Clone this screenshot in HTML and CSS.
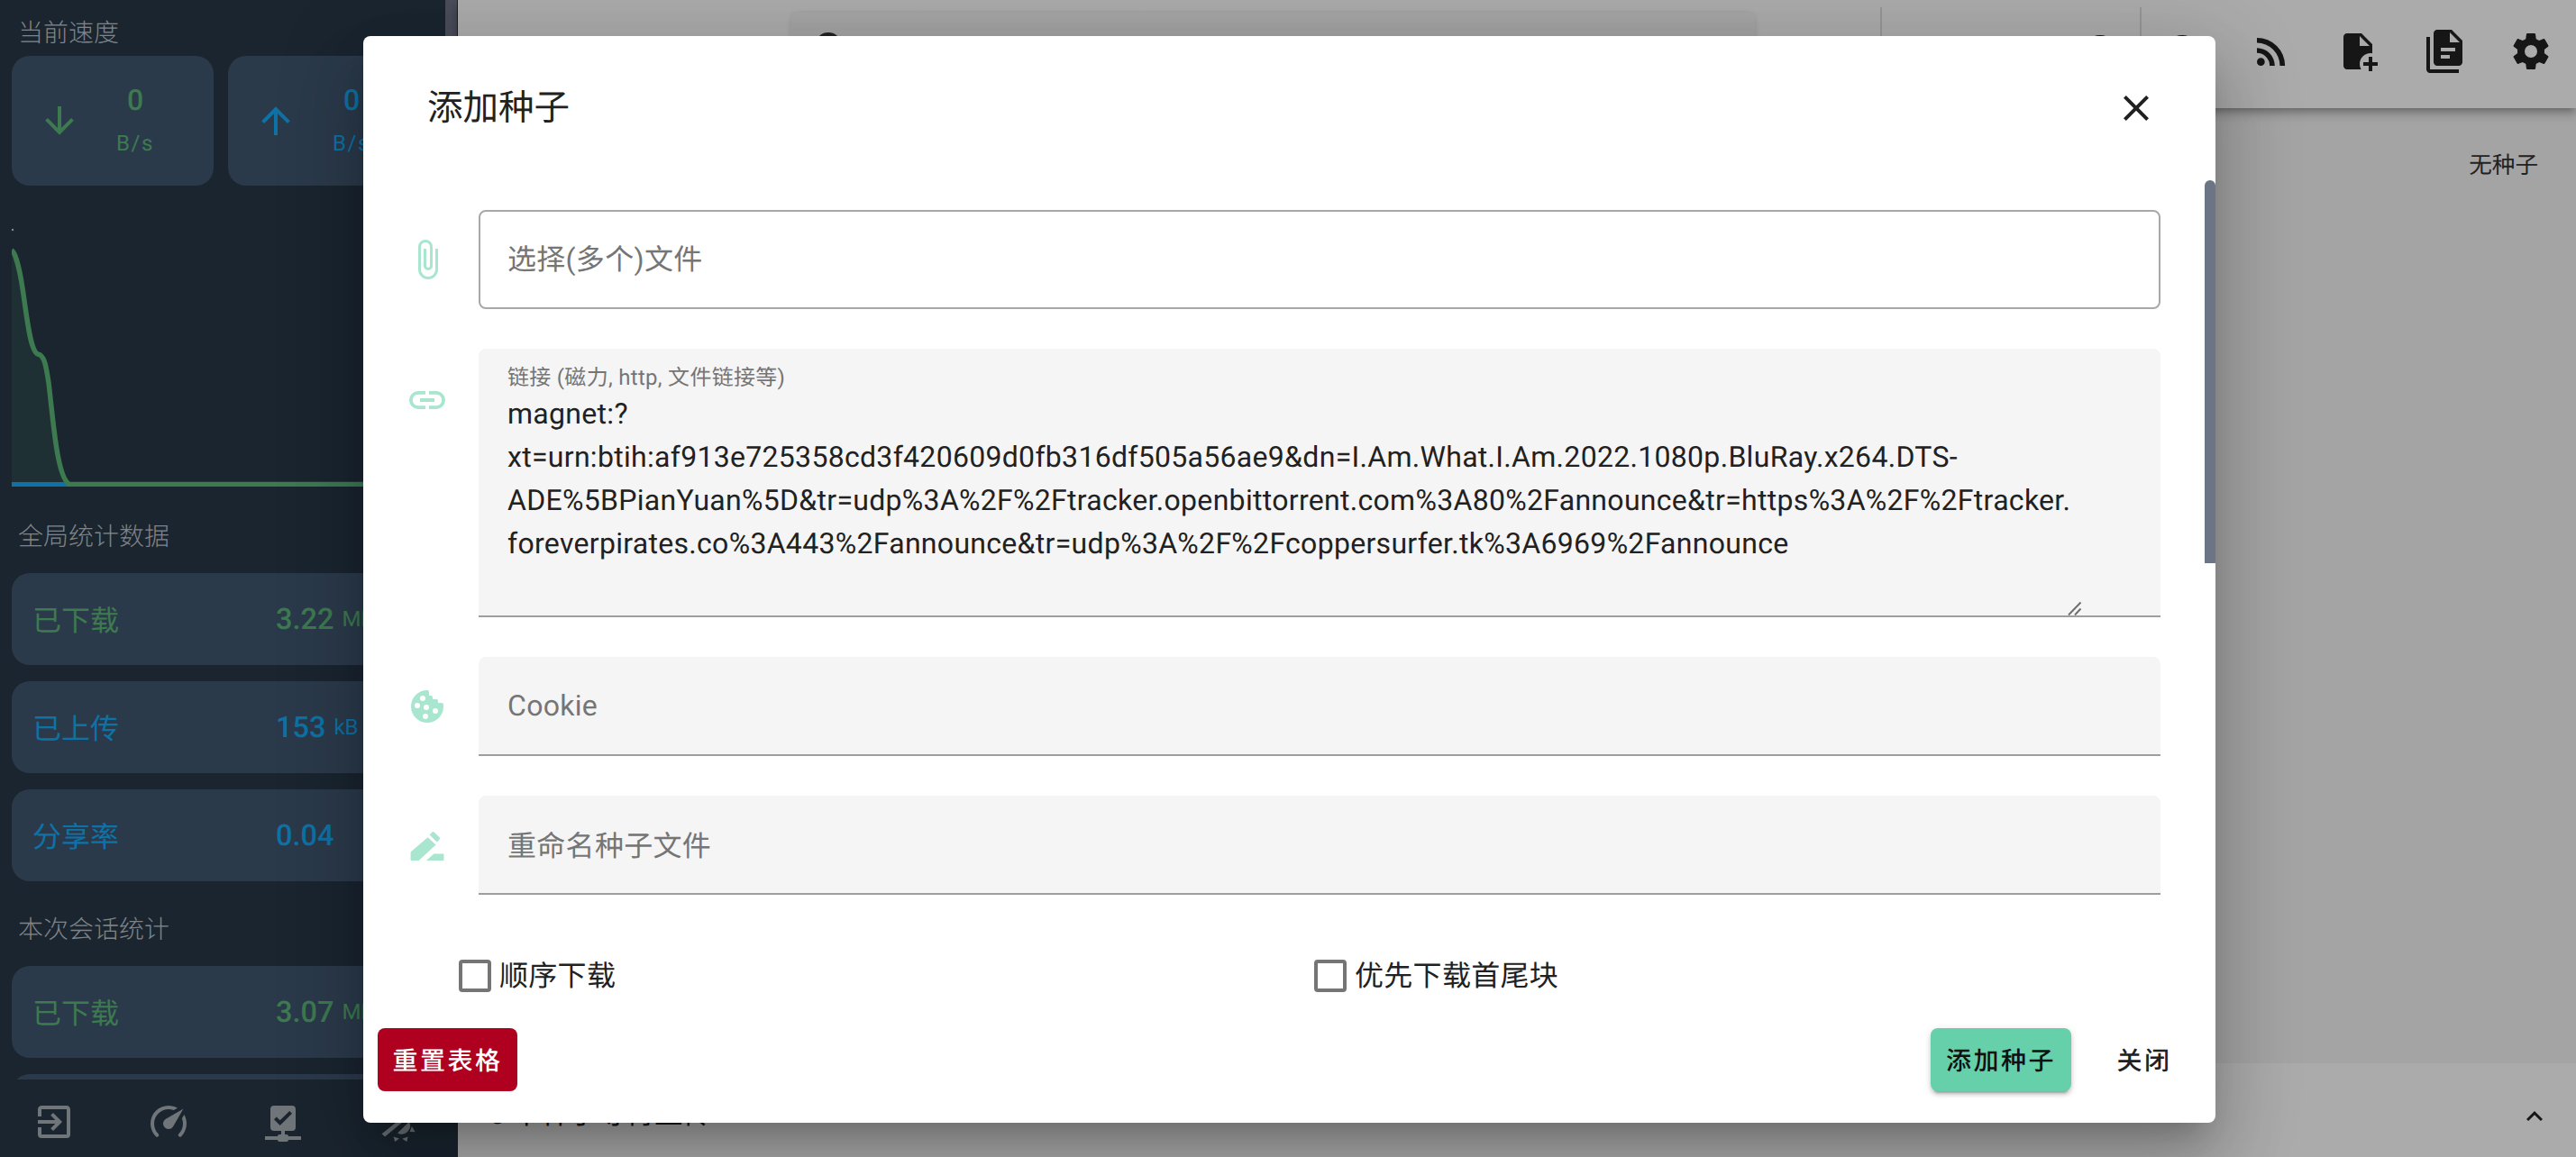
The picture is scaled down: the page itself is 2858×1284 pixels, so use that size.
FILE: index.html
```html
<!DOCTYPE html>
<html lang="zh">
<head>
<meta charset="utf-8">
<title>添加种子</title>
<link rel="stylesheet" href="styles.css">
</head>
<body>
<div class="app">
  <aside class="sidebar">
    <div class="side-scroll">
      <h3 class="side-title first">当前速度</h3>
      <div class="speed-row">
        <div class="speed-card green">
          <svg class="ic" viewBox="0 0 24 24"><path d="M11,4H13V16L18.5,10.5L19.92,11.92L12,19.84L4.08,11.92L5.5,10.5L11,16V4Z"/></svg>
          <div class="speed-text"><div class="speed-num">0</div><div class="speed-unit">B/s</div></div>
        </div>
        <div class="speed-card blue">
          <svg class="ic" viewBox="0 0 24 24"><path d="M13,20H11V8L5.5,13.5L4.08,12.08L12,4.16L19.92,12.08L18.5,13.5L13,8V20Z"/></svg>
          <div class="speed-text"><div class="speed-num">0</div><div class="speed-unit">B/s</div></div>
        </div>
      </div>
      <svg class="chart" viewBox="0 0 495 300" preserveAspectRatio="none">
        <circle cx="1" cy="15" r="1.2" fill="#8a8f95"/>
        <path class="chart-fill" d="M0 38 C4 40 9 60 12 80 C16 105 20 150 29 153 C36 154 38 165 41 185 C46 225 50 290 64 297.5 L0 297.5Z"/>
        <path class="chart-blue" d="M0 297.5H64"/>
        <path class="chart-green" d="M0 38 C4 40 9 60 12 80 C16 105 20 150 29 153 C36 154 38 165 41 185 C46 225 50 290 64 297.5 L495 297.5"/>
      </svg>
      <h3 class="side-title">全局统计数据</h3>
      <div class="stat green"><span class="stat-label">已下载</span><span class="stat-val">3.22</span><span class="stat-unit">MB</span></div>
      <div class="stat blue"><span class="stat-label">已上传</span><span class="stat-val">153</span><span class="stat-unit">kB</span></div>
      <div class="stat blue"><span class="stat-label">分享率</span><span class="stat-val">0.04</span></div>
      <h3 class="side-title">本次会话统计</h3>
      <div class="stat green"><span class="stat-label">已下载</span><span class="stat-val">3.07</span><span class="stat-unit">MB</span></div>
      <div class="stat blue"></div>
    </div>
    <nav class="side-nav">
      <svg class="ic" viewBox="0 0 24 24"><path d="M10.09,15.59L11.5,17L16.5,12L11.5,7L10.09,8.41L12.67,11H3V13H12.67L10.09,15.59M19,3H5C3.89,3 3,3.9 3,5V9H5V5H19V19H5V15H3V19A2,2 0 0,0 5,21H19A2,2 0 0,0 21,19V5C21,3.89 20.1,3 19,3Z"/></svg>
      <svg class="ic" viewBox="0 0 24 24"><path d="M12,16A3,3 0 0,1 9,13C9,11.88 9.61,10.9 10.5,10.39L20.21,4.77L14.68,14.35C14.18,15.33 13.17,16 12,16M12,3C13.81,3 15.5,3.5 16.97,4.32L14.87,5.53C14,5.19 13,5 12,5A8,8 0 0,0 4,13C4,15.21 4.89,17.21 6.34,18.65H6.35C6.74,19.04 6.74,19.67 6.35,20.06C5.96,20.45 5.32,20.45 4.93,20.07V20.07C3.12,18.26 2,15.76 2,13A10,10 0 0,1 12,3M22,13C22,15.76 20.88,18.26 19.07,20.07V20.07C18.68,20.45 18.05,20.45 17.66,20.06C17.27,19.67 17.27,19.04 17.66,18.65V18.65C19.11,17.2 20,15.21 20,13C20,12 19.81,11 19.46,10.1L20.67,8C21.5,9.5 22,11.18 22,13Z"/></svg>
      <svg class="ic" viewBox="0 0 24 24"><path d="M15,20A1,1 0 0,0 14,19H13V17H17A2,2 0 0,0 19,15V5A2,2 0 0,0 17,3H7A2,2 0 0,0 5,5V15A2,2 0 0,0 7,17H11V19H10A1,1 0 0,0 9,20H2V22H9A1,1 0 0,0 10,23H14A1,1 0 0,0 15,22H22V20H15M10.34,14L7,10.66L8.41,9.25L10.34,11.18L15.59,6L17,7.41L10.34,14Z"/></svg>
      <svg class="ic" viewBox="0 0 24 24"><path d="M3.3 18.6L13.5 10.5L15 12L5 20.2ZM12 18.3L18.5 11.9A4.8 4.8 0 0 1 12 18.3ZM9.8 20.2L13 21.3L10.6 23ZM14.6 21.4L17.8 20.2L17.2 23ZM20 14.5L21.8 17.6L18.8 17.5Z"/></svg>
    </nav>
    <div class="side-bar-thumb"></div>
  </aside>

  <main class="main">
    <header class="appbar">
      <div class="search">
        <svg class="ic" viewBox="0 0 24 24"><circle cx="10" cy="10" r="6.5" fill="none" stroke="currentColor" stroke-width="2"/><path d="M14.6 16L16 14.6L21 19.6L19.6 21Z"/></svg>
      </div>
      <span class="vbar vbar-a"></span>
      <div class="hump-wrap"><svg class="ic" viewBox="0 0 24 24"><circle cx="12" cy="12" r="9"/></svg></div>
      <span class="vbar vbar-b"></span>
      <div class="hump-wrap hump-b"><svg class="ic" viewBox="0 0 24 24"><circle cx="12" cy="12" r="9"/></svg></div>
      <div class="actions">
        <svg class="ic" viewBox="0 0 24 24"><path d="M6.18,15.64A2.18,2.18 0 0,1 8.36,17.82C8.36,19 7.38,20 6.18,20C5,20 4,19 4,17.82A2.18,2.18 0 0,1 6.18,15.64M4,4.44A15.56,15.56 0 0,1 19.56,20H16.73A12.73,12.73 0 0,0 4,7.27V4.44M4,10.1A9.9,9.9 0 0,1 13.9,20H11.07A7.07,7.07 0 0,0 4,12.93V10.1Z"/></svg>
        <svg class="ic" viewBox="0 0 24 24"><path d="M14 2H6C4.89 2 4 2.9 4 4V20C4 21.11 4.89 22 6 22H13.81C13.28 21.09 13 20.05 13 19C13 15.69 15.69 13 19 13C19.34 13 19.67 13.03 20 13.08V8L14 2M13 9V3.5L18.5 9H13M18 15V18H15V20H18V23H20V20H23V18H20V15H18Z"/></svg>
        <svg class="ic" viewBox="0 0 24 24"><path d="M16,0H8C6.9,0 6,0.9 6,2V18C6,19.1 6.9,20 8,20H20C21.1,20 22,19.1 22,18V6L16,0M15,16H10V14H15V16M18,12H10V10H18V12M15,7V1.5L20.5,7H15M4,4V22H20V24H4C2.9,24 2,23.1 2,22V4H4Z"/></svg>
        <svg class="ic" viewBox="0 0 24 24"><path d="M12,15.5A3.5,3.5 0 0,1 8.5,12A3.5,3.5 0 0,1 12,8.5A3.5,3.5 0 0,1 15.5,12A3.5,3.5 0 0,1 12,15.5M19.43,12.97C19.47,12.65 19.5,12.33 19.5,12C19.5,11.67 19.47,11.34 19.43,11L21.54,9.37C21.73,9.22 21.78,8.95 21.66,8.73L19.66,5.27C19.54,5.05 19.27,4.96 19.05,5.05L16.56,6.05C16.04,5.66 15.5,5.32 14.87,5.07L14.5,2.42C14.46,2.18 14.25,2 14,2H10C9.75,2 9.54,2.18 9.5,2.42L9.13,5.07C8.5,5.32 7.96,5.66 7.44,6.05L4.95,5.05C4.73,4.96 4.46,5.05 4.34,5.27L2.34,8.73C2.21,8.95 2.27,9.22 2.46,9.37L4.57,11C4.53,11.34 4.5,11.67 4.5,12C4.5,12.33 4.53,12.65 4.57,12.97L2.46,14.63C2.27,14.78 2.21,15.05 2.34,15.27L4.34,18.73C4.46,18.95 4.73,19.03 4.95,18.95L7.44,17.94C7.96,18.34 8.5,18.68 9.13,18.93L9.5,21.58C9.54,21.82 9.75,22 10,22H14C14.25,22 14.46,21.82 14.5,21.58L14.87,18.93C15.5,18.67 16.04,18.34 16.56,17.94L19.05,18.95C19.27,19.03 19.54,18.95 19.66,18.73L21.66,15.27C21.78,15.05 21.73,14.78 21.54,14.63L19.43,12.97Z"/></svg>
      </div>
    </header>
    <section class="content"><span class="empty">无种子</span></section>
    <footer class="statusbar">
      <span class="status-text">0 个种子等待上传</span>
      <svg class="ic status-caret" viewBox="0 0 24 24"><path d="M7.41,15.41L12,10.83L16.59,15.41L18,14L12,8L6,14L7.41,15.41Z"/></svg>
    </footer>
    <div class="scrim"></div>
  </main>
</div>

<div class="dialog">
  <div class="dlg-head">
    <span class="dlg-title">添加种子</span>
    <svg class="ic dlg-close" viewBox="0 0 24 24"><path d="M19,6.41L17.59,5L12,10.59L6.41,5L5,6.41L10.59,12L5,17.59L6.41,19L12,13.41L17.59,19L19,17.59L13.41,12L19,6.41Z"/></svg>
  </div>
  <div class="dlg-body">
    <div class="row">
      <svg class="ic mint" viewBox="0 0 24 24"><path d="M16.5,6V17.5A4,4 0 0,1 12.5,21.5A4,4 0 0,1 8.5,17.5V5A2.5,2.5 0 0,1 11,2.5A2.5,2.5 0 0,1 13.5,5V15.5A1,1 0 0,1 12.5,16.5A1,1 0 0,1 11.5,15.5V6H10V15.5A2.5,2.5 0 0,0 12.5,18A2.5,2.5 0 0,0 15,15.5V5A4,4 0 0,0 11,1A4,4 0 0,0 7,5V17.5A5.5,5.5 0 0,0 12.5,23A5.5,5.5 0 0,0 18,17.5V6H16.5Z"/></svg>
      <div class="field outlined"><span class="ph">选择(多个)文件</span></div>
    </div>
    <div class="row row-top">
      <svg class="ic mint link-ic" viewBox="0 0 24 24"><path d="M3.9,12C3.9,10.29 5.29,8.9 7,8.9H11V7H7A5,5 0 0,0 2,12A5,5 0 0,0 7,17H11V15.1H7C5.29,15.1 3.9,13.71 3.9,12M8,13H16V11H8V13M17,7H13V8.9H17C18.71,8.9 20.1,10.29 20.1,12C20.1,13.71 18.71,15.1 17,15.1H13V17H17A5,5 0 0,0 22,12A5,5 0 0,0 17,7Z"/></svg>
      <div class="field filled area">
        <label class="float-label">链接 (磁力, http, 文件链接等)</label>
        <textarea class="ta" wrap="off" readonly>magnet:?
xt=urn:btih:af913e725358cd3f420609d0fb316df505a56ae9&amp;dn=I.Am.What.I.Am.2022.1080p.BluRay.x264.DTS-
ADE%5BPianYuan%5D&amp;tr=udp%3A%2F%2Ftracker.openbittorrent.com%3A80%2Fannounce&amp;tr=https%3A%2F%2Ftracker.
foreverpirates.co%3A443%2Fannounce&amp;tr=udp%3A%2F%2Fcoppersurfer.tk%3A6969%2Fannounce</textarea>
        <svg class="grip" viewBox="0 0 16 16"><path d="M1 15.5L14.5 1.5M8 15.5L14.5 8.5"/></svg>
      </div>
    </div>
    <div class="row">
      <svg class="ic mint" viewBox="0 0 24 24"><path d="M12,3A9,9 0 0,0 3,12A9,9 0 0,0 12,21A9,9 0 0,0 21,12C21,11.5 20.96,11 20.87,10.5C20.6,10 20,10 20,10H18V9C18,8 17,8 17,8H15V7C15,6 14,6 14,6H13V4C13,3 12,3 12,3M9.5,6A1.5,1.5 0 0,1 11,7.5A1.5,1.5 0 0,1 9.5,9A1.5,1.5 0 0,1 8,7.5A1.5,1.5 0 0,1 9.5,6M6.5,10A1.5,1.5 0 0,1 8,11.5A1.5,1.5 0 0,1 6.5,13A1.5,1.5 0 0,1 5,11.5A1.5,1.5 0 0,1 6.5,10M11.5,11A1.5,1.5 0 0,1 13,12.5A1.5,1.5 0 0,1 11.5,14A1.5,1.5 0 0,1 10,12.5A1.5,1.5 0 0,1 11.5,11M16.5,13A1.5,1.5 0 0,1 18,14.5A1.5,1.5 0 0,1 16.5,16H16.5A1.5,1.5 0 0,1 15,14.5H15A1.5,1.5 0 0,1 16.5,13M11,16A1.5,1.5 0 0,1 12.5,17.5A1.5,1.5 0 0,1 11,19A1.5,1.5 0 0,1 9.5,17.5A1.5,1.5 0 0,1 11,16Z"/></svg>
      <div class="field filled"><span class="ph">Cookie</span></div>
    </div>
    <div class="row">
      <svg class="ic mint" viewBox="0 0 24 24"><path d="M2.8 20.5v-4.7L12.3 7.6l4.5 4.1-9.5 8.8zM11.5 20.5l4.2-3.8h5.5v3.8zM13.3 6.3l1.4-1.5a.8.8 0 0 1 1.1 0l3 2.8a.8.8 0 0 1 0 1.1L17.4 10.2z"/></svg>
      <div class="field filled"><span class="ph">重命名种子文件</span></div>
    </div>
    <div class="checks">
      <label class="check"><span class="box"></span><span>顺序下载</span></label>
      <label class="check"><span class="box"></span><span>优先下载首尾块</span></label>
    </div>
  </div>
  <div class="dlg-foot">
    <button class="btn btn-reset">重置表格</button>
    <div class="foot-right">
      <button class="btn btn-add">添加种子</button>
      <button class="btn btn-text">关闭</button>
    </div>
  </div>
  <div class="dlg-thumb"></div>
</div>
</body>
</html>
```

FILE: styles.css
```css
* { box-sizing: border-box; }
html, body { margin: 0; height: 100%; overflow: hidden; }
body { font-family: Roboto, "Noto Sans CJK SC", sans-serif; position: relative; background: #fff; color: #212121; text-rendering: geometricPrecision; }
.ic { width: 48px; height: 48px; fill: currentColor; flex: none; display: block; }
.app { display: flex; height: 1284px; }

/* sidebar */
.sidebar { width: 508px; flex: none; background: #1a2530; display: flex; flex-direction: column; position: relative; }
.side-scroll { flex: 1; overflow: hidden; padding-top: 17px; }
.side-title { margin: 0; padding-left: 20px; font-size: 28px; line-height: 40px; font-weight: 300; color: #7f8489; }
.speed-row { display: flex; gap: 16px; padding-left: 13px; margin-top: 5px; }
.speed-card { width: 224px; height: 144px; border-radius: 20px; background: #2b3a4b; display: flex; align-items: center; padding-left: 29px; }
.green { color: #3d7a50; }
.blue { color: #0e72a6; }
.speed-text { width: 100px; margin-left: 10px; text-align: center; }
.speed-num { font-size: 32px; font-weight: 500; line-height: 48px; margin-top: -4px; }
.speed-unit { font-size: 24px; line-height: 36px; margin-top: 6px; letter-spacing: 1.6px; }
.chart { display: block; width: 495px; height: 300px; margin: 34px 0 0 13px; }
.chart-fill { fill: #3d7a50; opacity: .13; stroke: none; }
.chart-blue { stroke: #0e72a6; stroke-width: 5; fill: none; }
.chart-green { stroke: #3d7a50; stroke-width: 5.5; fill: none; }
.chart + .side-title { margin-top: 36px; }
.stat { height: 102px; margin: 0 0 18px 13px; width: 482px; border-radius: 20px; background: #2b3a4b; display: flex; align-items: center; padding-left: 23px; }
.side-title + .stat { margin-top: 20px; }
.stat + .side-title { margin-top: 34px; }
.stat-label { width: 270px; font-size: 32px; font-weight: 400; }
.stat-val { font-size: 32.5px; font-weight: 500; }
.stat-unit { font-size: 24px; margin-left: 9px; }
.side-nav { height: 86px; flex: none; display: flex; gap: 79px; padding-left: 36px; align-items: center; color: #6f7579; background: #1a2530; padding-top: 8px; }
.side-bar-thumb { position: absolute; top: 0; right: 1px; width: 13px; height: 60px; background: #4a4d5a; }

/* main */
.main { flex: 1; position: relative; display: flex; flex-direction: column; min-width: 0; background: #f5f5f5; }
.appbar { height: 120px; flex: none; background: #fff; display: flex; align-items: center; position: relative; box-shadow: 0 4px 8px -2px rgba(0,0,0,.3), 0 8px 10px 1px rgba(0,0,0,.14); color: #212121; }
.search { width: 1069px; height: 92px; margin-left: 370px; border-radius: 8px; background: linear-gradient(#f9f9f9, #e0e0e0); box-shadow: 0 1px 6px rgba(0,0,0,.14); padding: 17px 0 0 21px; color: #333; }
.vbar { width: 2px; height: 104px; background: rgba(0,0,0,.12); flex: none; }
.vbar-a { margin-left: 139px; }
.hump-wrap { margin: 0 0 6px 218px; }
.vbar-b { margin-left: 20px; }
.hump-b { margin-left: 21px; }
.actions { display: flex; gap: 48px; margin: 0 0 7px 51px; }
.content { flex: 1; display: flex; justify-content: flex-end; padding: 48px 42px 0 0; }
.empty { font-size: 25.6px; line-height: 32px; color: #333; }
.statusbar { height: 104px; flex: none; background: #fff; display: flex; align-items: center; justify-content: space-between; padding: 14px 28px 0 35px; }
.status-text { font-size: 31.5px; color: #222; margin-bottom: 10px; }
.status-caret { width: 36px; height: 36px; }
.scrim { position: absolute; inset: 0; background: rgba(0,0,0,.33); }

/* dialog */
.dialog { position: absolute; left: 403px; top: 40px; width: 2055px; height: 1206px; background: #fff; border-radius: 8px; display: flex; flex-direction: column; overflow: hidden; }
.dialog { box-shadow: 0 22px 30px -14px rgba(0,0,0,.2), 0 48px 76px 6px rgba(0,0,0,.14), 0 18px 92px 16px rgba(0,0,0,.12); }
.dlg-head { height: 156px; flex: none; display: flex; align-items: center; justify-content: space-between; padding: 3px 64px 0 71px; }
.dlg-title { font-size: 39.5px; line-height: 56px; color: #212121; }
.dlg-close { color: #212121; width: 48px; height: 48px; }
.dlg-body { flex: 1; overflow: hidden; padding: 37px 61px 0 47px; display: flex; flex-direction: column; gap: 44px; }
.row { display: flex; align-items: center; gap: 33px; }
.row-top { align-items: flex-start; }
.link-ic { margin-top: 33px; }
.mint { color: #a8e6cf; }
.field { flex: 1; height: 110px; display: flex; align-items: center; padding: 0 32px; border-radius: 8px; }
.outlined { border: 2px solid #a8a8a8; padding: 0 30px 5px; }
.filled { background: #f5f5f5; border-bottom: 2px solid #9e9e9e; border-radius: 8px 8px 0 0; }
.ph { font-size: 32px; color: #757575; letter-spacing: .3px; }
.area { height: 298px; flex-direction: column; align-items: flex-start; padding-top: 17px; position: relative; }
.float-label { font-size: 24px; line-height: 31px; color: #757575; letter-spacing: .3px; }
.ta { display: block; width: 1747px; height: 243px; margin: 0; padding: 0; border: 0; background: transparent; outline: none; resize: none; overflow: hidden; font-family: Roboto, "Noto Sans CJK SC", sans-serif; font-size: 32px; line-height: 48px; letter-spacing: .3px; color: #212121; white-space: pre; text-rendering: geometricPrecision; }
.grip { position: absolute; right: 87px; bottom: 0; width: 16px; height: 16px; fill: none; stroke: #6f6f6f; stroke-width: 2; }
.checks { display: grid; grid-template-columns: 949px 1fr; padding-left: 59px; margin-top: 28px; }
.check { display: flex; align-items: center; gap: 9px; font-size: 32px; letter-spacing: .3px; color: #212121; line-height: 36px; }
.box { width: 36px; height: 36px; border: 4px solid #757575; border-radius: 4px; flex: none; }
.dlg-foot { flex: none; display: flex; justify-content: space-between; align-items: flex-start; padding: 0 24px 35px 16px; height: 105px; }
.foot-right { display: flex; gap: 26px; align-items: center; }
.btn { height: 70px; border: 0; border-radius: 8px; padding: 0 18px; font-family: Roboto, "Noto Sans CJK SC", sans-serif; font-size: 28px; font-weight: 500; letter-spacing: 2.5px; background: transparent; color: #212121; text-rendering: geometricPrecision; }
.btn-reset { background: #b00020; color: #fff; width: 155px; white-space: nowrap; padding: 0; }
.btn-add { background: #66d0aa; width: 156px; padding: 0; white-space: nowrap; box-shadow: 0 6px 2px -4px rgba(0,0,0,.2), 0 4px 4px 0 rgba(0,0,0,.14), 0 2px 10px 0 rgba(0,0,0,.12); color: #111; }
.btn-text { width: 110px; padding: 0; }
.dlg-thumb { position: absolute; right: 0; top: 160px; width: 12px; height: 425px; background: #6b7585; border-radius: 6px 6px 0 0; }
```
